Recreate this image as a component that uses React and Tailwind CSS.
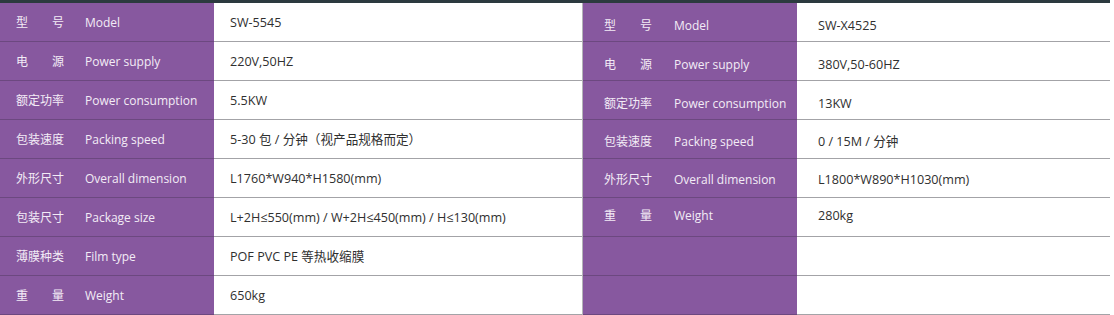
const left = [
  { cn: ['型', '号'], en: 'Model', value: 'SW-5545' },
  { cn: ['电', '源'], en: 'Power supply', value: '220V,50HZ' },
  { cn: ['额定功率'], en: 'Power consumption', value: '5.5KW' },
  { cn: ['包装速度'], en: 'Packing speed', value: '5-30 包 / 分钟（视产品规格而定）' },
  { cn: ['外形尺寸'], en: 'Overall dimension', value: 'L1760*W940*H1580(mm)' },
  { cn: ['包装尺寸'], en: 'Package size', value: 'L+2H≤550(mm) / W+2H≤450(mm) / H≤130(mm)' },
  { cn: ['薄膜种类'], en: 'Film type', value: 'POF PVC PE 等热收缩膜' },
  { cn: ['重', '量'], en: 'Weight', value: '650kg' },
];

// right table text sits a few px lower than its row center
const right = [
  { cn: ['型', '号'], en: 'Model', value: 'SW-X4525', shift: 'pt-[8px]' },
  { cn: ['电', '源'], en: 'Power supply', value: '380V,50-60HZ', shift: 'pt-[8px]' },
  { cn: ['额定功率'], en: 'Power consumption', value: '13KW', shift: 'pt-[8px]' },
  { cn: ['包装速度'], en: 'Packing speed', value: '0 / 15M / 分钟', shift: 'pt-[6px]' },
  { cn: ['外形尺寸'], en: 'Overall dimension', value: 'L1800*W890*H1030(mm)', shift: 'pt-[4px]' },
  { cn: ['重', '量'], en: 'Weight', value: '280kg', shift: 'pb-[2px]' },
  { cn: null, en: '', value: '' },
  { cn: null, en: '', value: '' },
];

const font = { fontFamily: '"Open Sans", "Noto Sans CJK SC", sans-serif' };

function Row({ row, labelPad, enPad, valuePad }) {
  return (
    <div className="flex h-[39px]">
      <div
        className={`flex w-[214px] shrink-0 items-center whitespace-nowrap border-b border-[#6c4880] bg-[#87589f] text-[#f3ecf6] ${labelPad} ${row.shift || 'pt-[2px]'}`}
      >
        {row.cn && (
          <div className="flex w-[48px] shrink-0 justify-between text-[12px]">
            {row.cn.map((c) => (
              <span key={c}>{c}</span>
            ))}
          </div>
        )}
        <span className={`text-[12px] ${enPad}`}>{row.en}</span>
      </div>
      <div
        className={`flex flex-1 items-center whitespace-nowrap border-b border-[#a3a3a7] bg-white text-[12.6px] text-[#2f2f2f] ${valuePad} ${row.shift || 'pt-[2px]'}`}
      >
        {row.value}
      </div>
    </div>
  );
}

export default function App() {
  return (
    <div className="w-[1114px] h-[315px] bg-white" style={font}>
      <div className="w-[1110px] border-t-[3px] border-[#2c3a3f] flex">
        <div className="w-[583px] border-r border-[#b4b4b8]">
          {left.map((r, i) => (
            <Row key={i} row={r} labelPad="pl-[16px]" enPad="ml-[21px]" valuePad="pl-[16px]" />
          ))}
        </div>
        <div className="flex-1">
          {right.map((r, i) => (
            <Row key={i} row={r} labelPad="pl-[21px]" enPad="ml-[22px]" valuePad="pl-[21px]" />
          ))}
        </div>
      </div>
    </div>
  );
}
